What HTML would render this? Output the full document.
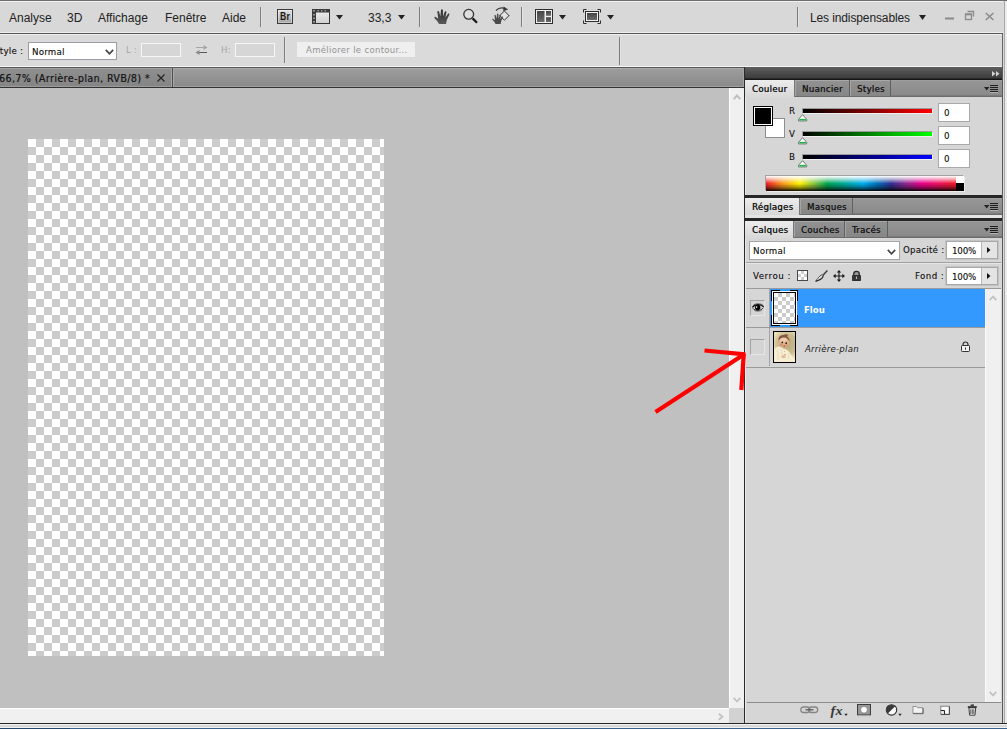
<!DOCTYPE html>
<html lang="fr">
<head>
<meta charset="utf-8">
<title>Photoshop</title>
<style>
*{box-sizing:border-box;margin:0;padding:0}
html,body{width:1007px;height:729px;overflow:hidden;background:#d6d6d6}
body{position:relative;font-family:"DejaVu Sans Condensed","Liberation Sans",sans-serif;font-size:9.5px;letter-spacing:.3px;color:#161616}
.abs,.t,svg{position:absolute}
.t{white-space:nowrap;line-height:14px;height:14px;text-shadow:.25px 0 0 rgba(22,22,22,.45)}
svg{overflow:visible}
/* top bars */
#menubar{left:0;top:0;width:1007px;height:34px;background:linear-gradient(#6e6e6e 0,#6e6e6e 1px,#f2f2f2 1px,#f2f2f2 2px,#d8d8d8 2px,#d8d8d8 32px,#efefef 32px,#efefef 33px,#555 33px)}
#menubar .t{font-family:"Liberation Sans","DejaVu Sans",sans-serif;font-size:12px;letter-spacing:0;top:11px;color:#222;text-shadow:none}
.vsep{position:absolute;width:2px;background:linear-gradient(90deg,#7d7d7d 0,#7d7d7d 1px,#e2e2e2 1px)}
#optbar{left:0;top:34px;width:1003px;height:33px;background:linear-gradient(#f0f0f0 0,#f0f0f0 1px,#dadada 1px,#dadada 32px,#f4f4f4 32px);border-right:1px solid #666}
#optbar .t{top:10px}
.dis{color:#a6a6a6;text-shadow:none}
.disbox{position:absolute;top:9px;width:40px;height:14px;border:1px solid #f6f6f6;background:#d6d6d6}
#tabbar{left:0;top:67px;width:744px;height:21px;background:linear-gradient(#585858 0,#585858 1px,#a8a8a8 1px,#a8a8a8 2px,#9c9c9c 2px,#8a8a8a 19px,#a0a0a0 19px,#a0a0a0 20px,#333 20px)}
#doctab{left:0;top:1px;width:174px;height:19px;background:linear-gradient(#a0a0a0 0,#a0a0a0 1px,#8e8e8e 1px,#858585 18px,#9c9c9c 18px);border-right:1px solid #a8a8a8;box-shadow:inset -1px 0 0 #505050,inset -2px 0 0 #a6a6a6}
#doctab .t{left:-1px;top:3px;font-size:10.5px;color:#161616;letter-spacing:0.45px;text-shadow:0.4px 0 0 rgba(22,22,22,.55)}
#canvas{left:0;top:88px;width:729px;height:620px;background:#c0c0c0}
#checker{left:28px;top:139px;width:356px;height:517px;background:repeating-conic-gradient(#ccc 0 25%,#fff 0 50%) 0 0/16px 16px}
#vscroll{left:729px;top:88px;width:15px;height:620px;background:#f0f0f0;border-left:1px solid #fff}
#hscroll{left:0;top:708px;width:729px;height:15px;background:#f0f0f0;border-top:1px solid #fff}
#corner{left:729px;top:708px;width:15px;height:15px;background:#d2d2d2}
#bottom{left:0;top:723px;width:1007px;height:6px;background:linear-gradient(#262626 0,#262626 1px,#f4f4f4 1px,#f4f4f4 2px,#d8d8d8 2px,#d8d8d8 4px,#f0f0f0 4px,#f0f0f0 5px,transparent 5px),linear-gradient(90deg,#24486e 0,#24486e 70px,#3a648f 70px)}
#rightedge{left:1003px;top:1px;width:4px;height:722px;background:linear-gradient(90deg,#dadada 0,#dadada 1px,#a8a8a8 1px,#a8a8a8 2px,#ececec 2px)}
/* right panel */
#panel{left:744px;top:67px;width:259px;height:656px;background:#d6d6d6;border-left:1px solid #2a2a2a;border-right:1px solid #5a5a5a;box-shadow:inset 1px 0 0 #e8e8e8}
#phead{left:0;top:0;width:257px;height:13px;background:linear-gradient(#5e5e5e,#3c3c3c 11px,#141414 12px)}
.tabrow{position:absolute;left:0;width:257px;height:17px;background:linear-gradient(#a6a6a6 0,#969696 1px,#8a8a8a 15px,#6c6c6c 16px,#6c6c6c 17px)}
.tab{position:absolute;top:0;height:16px;border-right:1px solid #606060;box-shadow:inset 1px 0 0 #a4a4a4,inset 0 1px 0 #a8a8a8;background:linear-gradient(#929292,#868686)}
.tab.on{height:17px;background:linear-gradient(#ececec,#d8d8d8);box-shadow:none;border-right:1px solid #777}
.tab .t{top:2px;left:7px;color:#1a1a1a;text-shadow:.3px 0 0}
.psep{position:absolute;left:0;width:257px;height:3px;background:#262626}
.numbox{position:absolute;left:193px;width:32px;height:19px;background:#fff;border:1px solid #a9a9a9}
.numbox .t{left:5px;top:2px}
.bar{position:absolute;left:57px;width:131px;height:6px;border:1px solid #9a9a9a;border-right-color:#f0f0f0;border-bottom-color:#f0f0f0;background-clip:padding-box;background-origin:padding-box}
.lbl{position:absolute;left:44px}
.field{position:absolute;width:52px;height:18px;border:1px solid #a8a8a8;background:#e4e4e4;box-shadow:0 0 0 1px #c4c4c4}
.field i{position:absolute;left:0;top:0;width:35px;height:16px;background:#fff;border-right:1px solid #b5b5b5}
.field .t{left:5px;top:2px;letter-spacing:-.1px}
.row{position:absolute;left:1px;width:239px;height:39px;border-bottom:1px solid #9a9a9a}
.eyecol{position:absolute;left:0;top:0;width:24px;height:38px;border-right:1px solid #a4a4a4;background:#d6d6d6}
.eyebox{position:absolute;left:4px;top:11px;width:15px;height:16px;border:1px solid #a2a2a2;border-right-color:#e6e6e6;border-bottom-color:#e6e6e6;background:#d4d4d4}
</style>
</head>
<body>
<div id="menubar" class="abs">
  <span class="t" style="left:9px">Analyse</span>
  <span class="t" style="left:67px">3D</span>
  <span class="t" style="left:98px">Affichage</span>
  <span class="t" style="left:165px">Fenêtre</span>
  <span class="t" style="left:222px">Aide</span>
  <div class="vsep" style="left:260px;top:7px;height:20px"></div>
  <!-- Br -->
  <div class="abs" style="left:277px;top:9px;width:16px;height:15px;border:1px solid #3a3a3a;background:linear-gradient(#e2e2e2,#a4a4a4);box-shadow:inset 0 0 0 1px rgba(255,255,255,.35)"><span class="t" style="left:2px;top:0;font-weight:bold;font-size:10px;letter-spacing:0.3px;color:#1a1a1a;line-height:13px;height:13px;transform:scaleX(.86);transform-origin:0 0">Br</span></div>
  <!-- film strip -->
  <svg style="left:312px;top:9px" width="18" height="15" viewBox="0 0 18 15"><defs><linearGradient id="fg" x1="0" y1="0" x2="0" y2="1"><stop offset="0" stop-color="#f2f2f2"/><stop offset="1" stop-color="#cfcfcf"/></linearGradient></defs><rect x=".5" y=".5" width="17" height="14" fill="url(#fg)" stroke="#333"/><rect x="0" y="0" width="18" height="3.500" fill="#3a3a3a"/><rect x="0" y="0" width="4" height="15" fill="#3a3a3a"/><g fill="#9a9a9a"><rect x="1" y="1" width="2" height="1.500"/><rect x="5.500" y="1" width="1.500" height="1.500"/><rect x="9" y="1" width="1.500" height="1.500"/><rect x="12.500" y="1" width="1.500" height="1.500"/><rect x="1" y="5" width="2" height="1.500"/><rect x="1" y="8.500" width="2" height="1.500"/><rect x="1" y="12" width="2" height="1.500"/></g></svg>
  <svg style="left:336px;top:15px" width="7" height="5"><path d="M0 0h7l-3.500 4.500z" fill="#222"/></svg>
  <span class="t" style="left:368px">33,3</span>
  <svg style="left:398px;top:15px" width="7" height="5"><path d="M0 0h7l-3.500 4.500z" fill="#222"/></svg>
  <div class="vsep" style="left:419px;top:7px;height:20px"></div>
  <!-- hand -->
  <svg style="left:434px;top:9px" width="16" height="15" viewBox="0 0 16 15"><defs><linearGradient id="hg" x1="0" y1="0" x2="0" y2="1"><stop offset="0" stop-color="#2e2e2e"/><stop offset="1" stop-color="#5a5a5a"/></linearGradient></defs><path d="M5 15C4 13 2.500 11 .6 9.200C0 8.400.8 7.400 1.800 8L4.200 9.800 3.400 3C3.300 1.800 4.900 1.600 5.100 2.800L6.300 7.600 7 1.200C7.100 0 8.800 0 8.900 1.200L9 7.600 10.700 2.800C11.100 1.700 12.600 2.100 12.400 3.300L11.400 8.400 13.900 4.900C14.600 4 15.800 4.700 15.300 5.700L12.800 11C12.500 12.500 12.300 13.800 12 15Z" fill="url(#hg)"/></svg>
  <!-- zoom -->
  <svg style="left:462px;top:8px" width="17" height="17" viewBox="0 0 17 17"><circle cx="6.700" cy="6.300" r="4.900" fill="#dedede" stroke="#333" stroke-width="1.300"/><path d="M10.600 10.400 15 14.800" stroke="#1a1a1a" stroke-width="2.300" stroke-linecap="butt"/></svg>
  <!-- rotate hand -->
  <svg style="left:491px;top:6px" width="19" height="19" viewBox="0 0 19 19"><path d="M13.400 5 18 9.600 13.400 14.200 8.800 9.600z" fill="#e4e4e4" stroke="#333" stroke-width="1"/><g transform="translate(1,7.200) scale(.72)"><path d="M5 15C4 13 2.500 11 .6 9.200C0 8.400.8 7.400 1.800 8L4.200 9.800 3.400 3C3.300 1.800 4.900 1.600 5.100 2.800L6.300 7.600 7 1.200C7.100 0 8.800 0 8.900 1.200L9 7.600 10.700 2.800C11.100 1.700 12.600 2.100 12.400 3.300L11.400 8.400 13.900 4.900C14.600 4 15.800 4.700 15.300 5.700L12.800 11C12.500 12.500 12.300 13.800 12 15Z" fill="#4a4a4a"/></g><path d="M5 4.500C7.500 2 11 1.400 14 2.600" fill="none" stroke="#3a3a3a" stroke-width="1.100"/><path d="M12.600 .6 17.200 3.400 12.200 5.200z" fill="#3a3a3a"/></svg>
  <div class="vsep" style="left:521px;top:7px;height:20px"></div>
  <!-- arrange -->
  <svg style="left:535px;top:9px" width="18" height="15" viewBox="0 0 18 15"><defs><linearGradient id="dg" x1="0" y1="0" x2="0" y2="1"><stop offset="0" stop-color="#454545"/><stop offset="1" stop-color="#6c6c6c"/></linearGradient></defs><rect x=".5" y=".5" width="17" height="14" fill="#f0f0f0" stroke="#2e2e2e"/><rect x="2" y="2" width="7.500" height="11" fill="url(#dg)"/><rect x="11" y="2" width="5" height="4.800" fill="url(#dg)"/><rect x="11" y="8.200" width="5" height="4.800" fill="url(#dg)"/></svg>
  <svg style="left:559px;top:15px" width="7" height="5"><path d="M0 0h7l-3.500 4.500z" fill="#222"/></svg>
  <!-- screen mode -->
  <svg style="left:583px;top:9px" width="18" height="15" viewBox="0 0 18 15"><path d="M.5 3.500V.5H3.500M14.500 .5h3V3.500M17.500 11.500v3h-3M3.500 14.500H.5V11.500" fill="none" stroke="#2e2e2e" stroke-width="1"/><rect x="2.500" y="2.500" width="13" height="10" fill="#f0f0f0" stroke="#2e2e2e"/><rect x="4" y="4" width="10" height="7" fill="url(#dg)"/></svg>
  <svg style="left:607px;top:15px" width="7" height="5"><path d="M0 0h7l-3.500 4.500z" fill="#222"/></svg>
  <div class="vsep" style="left:797px;top:7px;height:20px"></div>
  <span class="t" style="left:810px;letter-spacing:-.12px">Les indispensables</span>
  <svg style="left:919px;top:15px" width="7" height="5"><path d="M0 0h7l-3.500 5z" fill="#222"/></svg>
  <!-- window buttons -->
  <svg style="left:944px;top:10px" width="52" height="12" viewBox="0 0 52 12"><path d="M1 8.500h9" stroke="#8a8a8a" stroke-width="2"/><path d="M23.500 1.500h6v5" fill="none" stroke="#8a8a8a" stroke-width="1.300"/><rect x="21.500" y="4" width="6" height="5.500" fill="none" stroke="#8a8a8a" stroke-width="1.300"/><path d="M21.500 4.500h6" stroke="#8a8a8a" stroke-width="1.600"/><path d="M41.800 3l7.600 7M49.400 3l-7.600 7" stroke="#8a8a8a" stroke-width="1.500"/></svg>
</div>

<div id="optbar" class="abs">
  <span class="t" style="left:-6px">Style :</span>
  <div class="abs" style="left:28px;top:8px;width:89px;height:18px;border:1px solid #9c9ca6;background:#fff"><span class="t" style="left:3px;top:2px">Normal</span>
    <svg style="left:76px;top:6px" width="9" height="6"><path d="M.8.800 4.500 4.800 8.200.8" fill="none" stroke="#444" stroke-width="1.700"/></svg></div>
  <span class="t dis" style="left:126px;top:9px">L :</span>
  <div class="disbox" style="left:141px"></div>
  <svg style="left:195px;top:10px" width="13" height="12" viewBox="0 0 13 12"><path d="M1 3.500h9" stroke="#a6a6a6" stroke-width="1"/><path d="M8.500 1 12.500 3.500 8.500 6z" fill="#a6a6a6"/><path d="M3 8.500h9" stroke="#5a5a5a" stroke-width="1"/><path d="M4.500 6 .5 8.500 4.500 11z" fill="#8a8a8a"/></svg>
  <span class="t dis" style="left:221px;top:9px">H:</span>
  <div class="disbox" style="left:235px"></div>
  <div class="vsep" style="left:284px;top:3px;height:26px"></div>
  <div class="abs" style="left:297px;top:8px;width:118px;height:15px;background:#efefef"><span class="t" style="left:9px;top:1px;color:#939393;text-shadow:none">Améliorer le contour...</span></div>
  <div class="vsep" style="left:619px;top:3px;height:28px"></div>
</div>

<div id="tabbar" class="abs">
  <div class="abs" style="left:743px;top:1px;width:1px;height:19px;background:#a4a4a4"></div>
  <div id="doctab" class="abs"><span class="t">66,7% (Arrière-plan, RVB/8) *</span>
    <svg style="left:157px;top:6px" width="8" height="8"><path d="M.5.500l7 7M7.500.5l-7 7" stroke="#222" stroke-width="1.200"/></svg></div>
</div>
<div id="canvas" class="abs"></div>
<div id="checker" class="abs"></div>
<div id="vscroll" class="abs">
  <svg style="left:3px;top:6px" width="8" height="6"><path d="M.7 5.200 4 1.500 7.300 5.200" fill="none" stroke="#bebebe" stroke-width="2"/></svg>
  <svg style="left:3px;top:609px" width="8" height="6"><path d="M.7.800 4 4.500 7.300.8" fill="none" stroke="#c2c2c2" stroke-width="1.800"/></svg>
</div>
<div id="hscroll" class="abs">
  <svg style="left:718px;top:4px" width="6" height="8"><path d="M.8.700 4.500 3.700.8 6.700" fill="none" stroke="#c2c2c2" stroke-width="1.800"/></svg>
</div>
<div id="corner" class="abs"></div>

<div id="panel" class="abs">
  <div id="phead" class="abs"><svg style="left:247px;top:4px" width="8" height="6"><path d="M0 0l3.500 2.750L0 5.500zM4 0l3.500 2.750L4 5.500z" fill="#d2d2d2"/></svg></div>
  <!-- Couleur group -->
  <div class="tabrow" style="top:13px">
    <div class="tab on" style="left:0;width:50px"><span class="t">Couleur</span></div>
    <div class="tab" style="left:50px;width:55px"><span class="t">Nuancier</span></div>
    <div class="tab" style="left:105px;width:41px"><span class="t">Styles</span></div>
    <svg class="pm" style="left:239px;top:5px" width="15" height="9" viewBox="0 0 15 9"><path d="M0 2h5.400L2.700 5.500z" fill="#222"/><path d="M6 .5h8M6 2.500h8M6 4.500h8M6 6.500h8" stroke="#1e1e1e" stroke-width="1"/><path d="M6 7.500h8" stroke="#b4b4b4" stroke-width="1"/></svg>
  </div>
  <!-- swatches -->
  <div class="abs" style="left:20px;top:51px;width:20px;height:20px;background:#fff;border:1px solid #8e8e8e"></div>
  <div class="abs" style="left:8px;top:39px;width:20px;height:20px;background:#000;border:1px solid #000;box-shadow:inset 0 0 0 1px #fff"></div>
  <span class="t lbl" style="top:37px">R</span>
  <span class="t lbl" style="top:60px">V</span>
  <span class="t lbl" style="top:83px">B</span>
  <div class="bar" style="top:41px;background:linear-gradient(90deg,#000,#f00)"></div>
  <div class="bar" style="top:64px;background:linear-gradient(90deg,#000,#0f0)"></div>
  <div class="bar" style="top:87px;background:linear-gradient(90deg,#000,#00f)"></div>
  <svg style="left:53px;top:47px" width="10" height="8" viewBox="0 0 10 8"><path d="M4.600 .7 8.700 5.300V6.900H.5V5.300z" fill="#fff" stroke="#56705a" stroke-width=".9" stroke-linejoin="round"/><path d="M1.300 5.600h6.600" stroke="#22b14c" stroke-width="1.500"/></svg>
  <svg style="left:53px;top:70px" width="10" height="8" viewBox="0 0 10 8"><path d="M4.600 .7 8.700 5.300V6.900H.5V5.300z" fill="#fff" stroke="#56705a" stroke-width=".9" stroke-linejoin="round"/><path d="M1.300 5.600h6.600" stroke="#22b14c" stroke-width="1.500"/></svg>
  <svg style="left:53px;top:93px" width="10" height="8" viewBox="0 0 10 8"><path d="M4.600 .7 8.700 5.300V6.900H.5V5.300z" fill="#fff" stroke="#56705a" stroke-width=".9" stroke-linejoin="round"/><path d="M1.300 5.600h6.600" stroke="#22b14c" stroke-width="1.500"/></svg>
  <div class="numbox" style="top:36px"><span class="t">0</span></div>
  <div class="numbox" style="top:59px"><span class="t">0</span></div>
  <div class="numbox" style="top:82px"><span class="t">0</span></div>
  <!-- ramp -->
  <div class="abs" style="left:21px;top:109px;width:198px;height:15px;box-shadow:-1px -1px 0 #a2a2a2,1px 1px 0 #ececec;background:linear-gradient(90deg,#ee1c25 0,#f7941d 8%,#fff200 17%,#8dc63f 24%,#00a651 31%,#00a99d 40%,#00aeef 49%,#0072bc 56%,#2e3192 63%,#92278f 71%,#ec008c 79%,#ed145b 88%,#ed1c24 96%)">
    <div class="abs" style="left:0;top:0;width:198px;height:15px;background:linear-gradient(#fff 0,rgba(255,255,255,.6) 22%,rgba(255,255,255,0) 50%,rgba(0,0,0,0) 52%,rgba(0,0,0,.4) 78%,rgba(0,0,0,.95) 100%)"></div>
    <div class="abs" style="left:190px;top:0;width:8px;height:7px;background:#fff"></div>
    <div class="abs" style="left:190px;top:7px;width:8px;height:8px;background:#000"></div>
  </div>
  <div class="psep" style="top:128px"></div>
  <!-- Réglages group -->
  <div class="tabrow" style="top:131px">
    <div class="tab on" style="left:0;width:55px"><span class="t">Réglages</span></div>
    <div class="tab" style="left:55px;width:53px"><span class="t">Masques</span></div>
    <svg class="pm" style="left:239px;top:5px" width="15" height="9" viewBox="0 0 15 9"><path d="M0 2h5.400L2.700 5.500z" fill="#222"/><path d="M6 .5h8M6 2.500h8M6 4.500h8M6 6.500h8" stroke="#1e1e1e" stroke-width="1"/><path d="M6 7.500h8" stroke="#b4b4b4" stroke-width="1"/></svg>
  </div>
  <div class="abs" style="left:0;top:148px;width:257px;height:3px;background:#e4e4e4"></div>
  <div class="psep" style="top:151px"></div>
  <!-- Calques group -->
  <div class="tabrow" style="top:154px">
    <div class="tab on" style="left:0;width:49px"><span class="t">Calques</span></div>
    <div class="tab" style="left:49px;width:51px"><span class="t">Couches</span></div>
    <div class="tab" style="left:100px;width:43px"><span class="t">Tracés</span></div>
    <svg class="pm" style="left:239px;top:5px" width="15" height="9" viewBox="0 0 15 9"><path d="M0 2h5.400L2.700 5.500z" fill="#222"/><path d="M6 .5h8M6 2.500h8M6 4.500h8M6 6.500h8" stroke="#1e1e1e" stroke-width="1"/><path d="M6 7.500h8" stroke="#b4b4b4" stroke-width="1"/></svg>
  </div>
  <!-- blend row -->
  <div class="abs" style="left:4px;top:174px;width:151px;height:19px;border:1px solid #a6a6a6;background:#fff"><span class="t" style="left:3px;top:2px">Normal</span>
    <svg style="left:137px;top:7px" width="9" height="6"><path d="M.8.800 4.500 4.800 8.200.8" fill="none" stroke="#444" stroke-width="1.700"/></svg></div>
  <span class="t" style="left:158px;top:176px">Opacité :</span>
  <div class="field" style="left:201px;top:174px"><i></i><span class="t">100%</span><svg style="left:40px;top:5px" width="4" height="6"><path d="M0 0l3.500 3L0 6z" fill="#111"/></svg></div>
  <div class="abs" style="left:1px;top:195px;width:255px;height:2px;background:linear-gradient(#a0a0a0 50%,#e6e6e6 50%)"></div>
  <!-- lock row -->
  <span class="t" style="left:8px;top:202px;letter-spacing:.6px">Verrou :</span>
  <svg style="left:52px;top:203px" width="11" height="11" viewBox="0 0 11 11"><rect x=".5" y=".5" width="10" height="10" fill="#fff" stroke="#4a4a4a"/><path d="M4 1h3v3H4zM1 4h3v3H1zM7 4h3v3H7zM4 7h3v3H4z" fill="#cfcfcf"/></svg>
  <svg style="left:70px;top:203px" width="13" height="12" viewBox="0 0 13 12"><path d="M12.300 .6 7.800 5.400" stroke="#3c3c3c" stroke-width="1.500"/><path d="M7.300 4.600C9.300 6.400 5.800 10.300.4 11.200 3 9.400 3.400 6 7.300 4.600z" fill="#e6e6e6" stroke="#3c3c3c" stroke-width=".9"/><path d="M8.300 6.300C7.500 8.300 5 10.300 1 11.100" stroke="#333" stroke-width="1.100" fill="none"/></svg>
  <svg style="left:88px;top:203px" width="12" height="12" viewBox="0 0 12 12"><path d="M6 1.500v9M1.500 6h9" stroke="#1c1c1c" stroke-width="1.100"/><path d="M6 0 8.200 2.600H3.800zM6 12 3.800 9.400h4.400zM0 6 2.600 3.800v4.400zM12 6 9.400 8.200V3.800z" fill="#1c1c1c"/></svg>
  <svg style="left:107px;top:204px" width="9" height="10" viewBox="0 0 9 10"><path d="M1.700 4.500V3.200a2.800 2.800 0 0 1 5.600 0v1.300" fill="#999" stroke="#2a2a2a" stroke-width="1.300"/><rect x="0" y="4" width="9" height="6" rx=".8" fill="#2e2e2e"/><path d="M0 6h9M0 8h9" stroke="#555" stroke-width=".5"/><rect x="4" y="5.500" width="1" height="2.500" fill="#bbb"/></svg>
  <span class="t" style="left:170px;top:202px;letter-spacing:.5px">Fond :</span>
  <div class="field" style="left:201px;top:200px"><i></i><span class="t">100%</span><svg style="left:40px;top:5px" width="4" height="6"><path d="M0 0l3.500 3L0 6z" fill="#111"/></svg></div>
  <!-- layers list -->
  <div class="abs" style="left:1px;top:221px;width:255px;height:1px;background:#9a9a9a"></div>
  <div class="abs" style="left:240px;top:222px;width:16px;height:413px;background:#f0f0f0;border-left:1px solid #fafafa">
    <svg style="left:3px;top:6px" width="8" height="6"><path d="M.7 5.200 4 1.500 7.300 5.200" fill="none" stroke="#c2c2c2" stroke-width="1.800"/></svg>
    <svg style="left:3px;top:402px" width="8" height="6"><path d="M.7.800 4 4.500 7.300.8" fill="none" stroke="#c2c2c2" stroke-width="1.800"/></svg>
  </div>
  <div class="row" style="top:222px;background:#3399ff">
    <div class="eyecol"><div class="eyebox"><svg style="left:1px;top:2px" width="12" height="9" viewBox="0 0 12 9"><path d="M.4 4.600C2.500 1.300 8.800 1 11.600 4C9.500 7.800 3 8 .4 4.600z" fill="#d8d8d8"/><path d="M.3 4.400C2.500 1.100 8.600.8 11.700 3.800" fill="none" stroke="#111" stroke-width="1.300"/><path d="M1.400 2.200C4 .2 8.200.2 10.900 2.300" fill="none" stroke="#3a3a3a" stroke-width=".7"/><path d="M.8 5.200C3 8.300 8.600 8.500 11.400 4.600" fill="none" stroke="#1e1e1e" stroke-width=".9"/><path d="M2 7.300C4.500 9 8 8.800 10 7" fill="none" stroke="#555" stroke-width=".5"/><circle cx="5.700" cy="4.500" r="2.700" fill="#000"/><circle cx="4.600" cy="4.100" r=".8" fill="#fff"/></svg></div></div>
    <div class="abs" style="left:25px;top:1px;width:27px;height:36px;background:#fff;border:1px solid #000;box-shadow:inset 0 0 0 1px #fff,inset 0 0 0 2px #000">
      <div class="abs" style="left:2px;top:2px;width:21px;height:30px;background:repeating-conic-gradient(#ccc 0 25%,#fff 0 50%) 0 0/8px 8px;border:0"></div>
      <div class="abs" style="left:8px;top:-1px;width:10px;height:1px;background:#3399ff"></div>
      <div class="abs" style="left:8px;top:34px;width:10px;height:1px;background:#3399ff"></div>
      <div class="abs" style="left:-1px;top:10px;width:1px;height:14px;background:#3399ff"></div>
      <div class="abs" style="left:25px;top:10px;width:1px;height:14px;background:#3399ff"></div>
    </div>
    <span class="t" style="left:58px;top:14px;color:#fff;font-weight:bold;letter-spacing:0;text-shadow:none">Flou</span>
  </div>
  <div class="row" style="top:261px;height:40px">
    <div class="eyecol"><div class="eyebox"></div></div>
    <div class="abs" style="left:27px;top:3px;width:23px;height:32px;border:1px solid #000;background:linear-gradient(100deg,#e6d6ad,#cbbb90);overflow:hidden">
      <svg style="left:0;top:0" width="21" height="30" viewBox="0 0 21 30"><defs><radialGradient id="bb" cx="13" cy="12" r="15" gradientUnits="userSpaceOnUse"><stop offset="0" stop-color="#b7a97a"/><stop offset=".65" stop-color="#cbbd90"/><stop offset="1" stop-color="#ecdfb2"/></radialGradient></defs><rect width="21" height="30" fill="url(#bb)"/><path d="M0 17.500C2 14.500 5 13.800 7 15.200L10 17C13 17 15 19 16.500 22 18 24.500 20 26 21 27V30H0z" fill="#f6edd3"/><path d="M3 18c1 3 1.500 6 1 10M7 17.500c1 3 1 5.500.5 8M14.500 21c.5 2 .3 4-.5 6" stroke="#e0d3ae" stroke-width=".7" fill="none"/><ellipse cx="10" cy="9.600" rx="5.400" ry="6.200" fill="#e0b28c"/><ellipse cx="9.300" cy="7.600" rx="3.600" ry="2.500" fill="#efcdaa"/><path d="M4.600 8.700C4 5 6.500 2.800 9.500 3 11 2.100 13 2.100 14.200 3 13.600 3.500 13.100 4 13.300 4.500 14.900 5.500 15.900 7.500 15.500 9.700 14.600 7.100 12.600 5.400 10 5.400 7.500 5.400 5.600 6.700 4.600 8.700z" fill="#7d4a3a" opacity=".88"/><circle cx="8.300" cy="10.300" r=".85" fill="#2a1d1a"/><circle cx="12.200" cy="11.200" r=".85" fill="#2a1d1a"/><circle cx="7.200" cy="12.700" r="1.300" fill="#c9655a" opacity=".5"/><circle cx="12.700" cy="13.400" r="1.100" fill="#c9655a" opacity=".45"/><ellipse cx="10.200" cy="14.100" rx="1" ry=".6" fill="#a83232"/><ellipse cx="9.600" cy="24.600" rx="2.300" ry="1.600" fill="#e6bb98"/><circle cx="11" cy="22.600" r=".5" fill="#b5483e"/><circle cx="10.600" cy="19.600" r=".4" fill="#b5483e"/></svg>
    </div>
    <span class="t" style="left:59px;top:14px;font-style:italic;letter-spacing:.25px;text-shadow:none">Arrière-plan</span>
    <svg style="left:215px;top:13px" width="9" height="11" viewBox="0 0 9 11"><path d="M2 5V3.500a2.500 2.500 0 0 1 5 0V5" fill="none" stroke="#333" stroke-width="1.200"/><rect x=".5" y="4.500" width="8" height="6" rx=".8" fill="#f2f2f2" stroke="#333"/><rect x="4" y="6.500" width="1" height="2.200" fill="#333"/></svg>
  </div>
  <!-- footer -->
  <div class="abs" style="left:2px;top:635px;width:254px;height:1px;background:#8c8c8c"></div>
  <svg style="left:55px;top:637px" width="180" height="14" viewBox="0 0 180 14">
    <g fill="none" stroke="#858585" stroke-width="1.300"><rect x=".8" y="3" width="9" height="5.500" rx="2.750"/><rect x="8.700" y="3" width="9" height="5.500" rx="2.750"/><path d="M5.500 5.750h8" stroke="#5a5a5a"/></g>
    <text x="30.500" y="11" font-family="Liberation Serif, serif" font-style="italic" font-weight="bold" font-size="13.500" fill="#383838" textLength="12.500" lengthAdjust="spacingAndGlyphs">fx</text><path d="M44.300 9.800h3.400l-1.700 2.200z" fill="#222"/>
    <rect x="57.500" y=".5" width="13" height="10.500" fill="#979797" stroke="#3c3c3c"/><path d="M57 11.800h14" stroke="#bdbdbd" stroke-width=".8"/><circle cx="64" cy="5.750" r="3.300" fill="#fff" stroke="#666" stroke-width=".5"/>
    <circle cx="91.500" cy="5.900" r="5.200" fill="#fafafa" stroke="#333" stroke-width="1.100"/><path d="M95.200 2.200A5.200 5.200 0 0 0 87.800 9.600z" fill="#3a3a3a"/><path d="M98.300 9.800h3.400l-1.700 2.200z" fill="#222"/>
    <path d="M112.900 2.500h3.800l.9 1.200h5.200v5.600h-9.900z" fill="#f2f2f2" stroke="#8a8a8a" stroke-width=".9"/><path d="M113 9.700h10.200V4" fill="none" stroke="#555" stroke-width=".8"/>
    <rect x="140.800" y="2.200" width="8.400" height="8" fill="#fbfbfb" stroke="#777" stroke-width=".9"/><path d="M141 10.500h8.500V2.500" fill="none" stroke="#444" stroke-width=".9"/><path d="M140.800 6.500h3.700v3.700" fill="#ddd" stroke="#222" stroke-width="1"/>
    <path d="M168.900 3.800h6.800l-.7 7.400h-5.400z" fill="#f4f4f4" stroke="#2a2a2a" stroke-width=".9"/><path d="M167.800 3h9" stroke="#1e1e1e" stroke-width="1.500"/><path d="M170.600 1.200h3.400" stroke="#1e1e1e" stroke-width="1.300"/><path d="M170.800 5.200v4.800M172.300 5.200v4.800M173.800 5.200v4.800" stroke="#333" stroke-width=".8"/>
  </svg>
</div>
<div id="rightedge" class="abs"></div>
<div id="bottom" class="abs"></div>
<!-- red arrow -->
<svg style="left:0;top:0" width="1007" height="729" viewBox="0 0 1007 729"><g fill="none" stroke="#ff0000" stroke-width="4.200" stroke-linecap="butt" stroke-linejoin="miter"><path d="M655.500 412 743.800 354.600"/><path d="M704.500 350.500 745.300 354.400"/><path d="M741.300 390 743.800 353.500"/></g></svg>
</body>
</html>
